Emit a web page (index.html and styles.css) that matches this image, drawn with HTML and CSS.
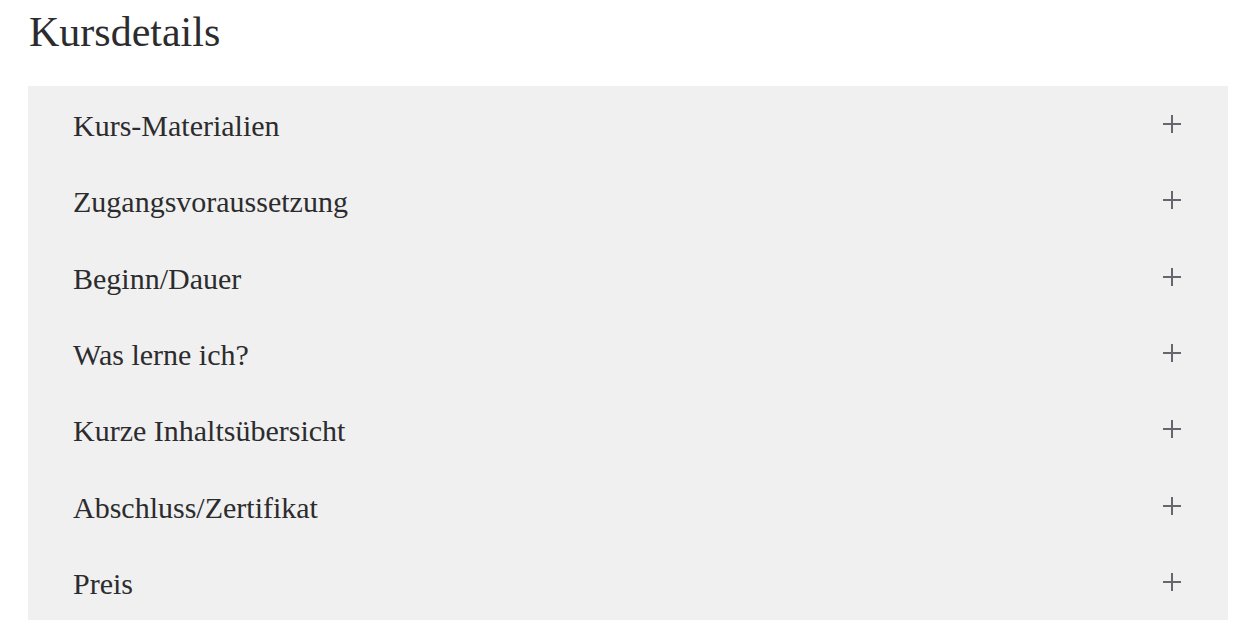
FILE: index.html
```html
<!DOCTYPE html>
<html lang="de">
<head>
<meta charset="utf-8">
<title>Kursdetails</title>
<link rel="stylesheet" href="styles.css">
</head>
<body>
<section class="course">
  <h2 class="title">Kursdetails</h2>
  <div class="accordion">
    <div class="item"><span class="label">Kurs-Materialien</span><span class="plus"></span></div>
    <div class="item"><span class="label">Zugangsvoraussetzung</span><span class="plus"></span></div>
    <div class="item"><span class="label">Beginn/Dauer</span><span class="plus"></span></div>
    <div class="item"><span class="label">Was lerne ich?</span><span class="plus"></span></div>
    <div class="item"><span class="label">Kurze Inhaltsübersicht</span><span class="plus"></span></div>
    <div class="item"><span class="label">Abschluss/Zertifikat</span><span class="plus"></span></div>
    <div class="item"><span class="label">Preis</span><span class="plus"></span></div>
  </div>
</section>
</body>
</html>
```
FILE: styles.css
```css
html, body {
  margin: 0;
  padding: 0;
  background: #ffffff;
}
.course {
  padding: 0 23px 0 28px;
  font-family: "Liberation Serif", "Times New Roman", serif;
  color: #2c2c2e;
}
.title {
  margin: 0;
  padding: 6px 0 0 1px;
  height: 86px;
  box-sizing: border-box;
  font-size: 42px;
  font-weight: 400;
  line-height: 52px;
}
.accordion {
  background: #f0f0f0;
  width: 1200px;
  display: flex;
  flex-direction: column;
}
.item {
  height: 76.3px;
  display: flex;
  align-items: center;
  justify-content: space-between;
  padding: 0 47px 0 45px;
}
.label {
  font-size: 30px;
  line-height: 34px;
  padding-top: 4px;
}
.plus {
  position: relative;
  width: 18px;
  height: 18px;
  flex: none;
}
.plus::before, .plus::after {
  content: "";
  position: absolute;
  background: #66666e;
}
.plus::before {
  left: 0;
  right: 0;
  top: 8px;
  height: 2px;
}
.plus::after {
  top: 0;
  bottom: 0;
  left: 8px;
  width: 2px;
}
```
